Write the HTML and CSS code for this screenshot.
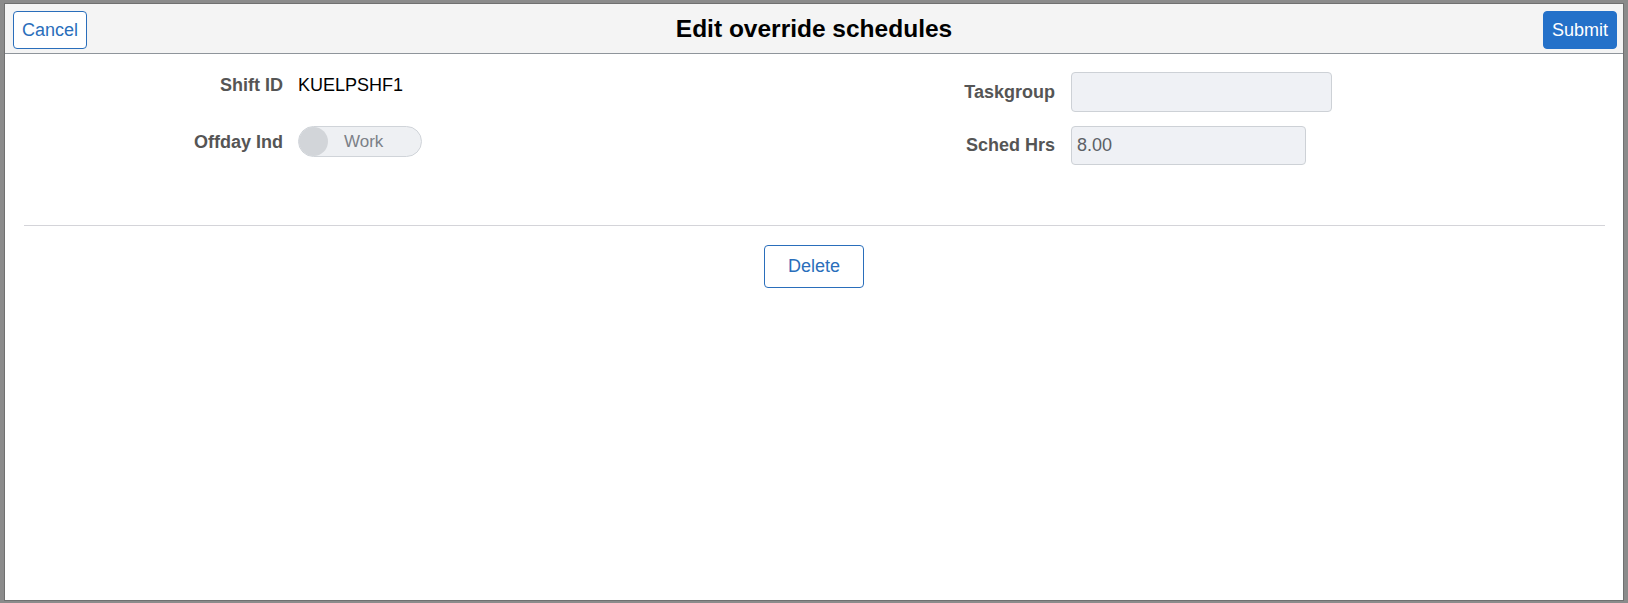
FILE: index.html
```html
<!DOCTYPE html>
<html lang="en">
<head>
<meta charset="utf-8">
<title>Edit override schedules</title>
<link rel="stylesheet" href="styles.css">
</head>
<body>
<div class="modal">
  <header class="bar">
    <div class="bar-left"><button class="btn btn-outline">Cancel</button></div>
    <h1 class="title">Edit override schedules</h1>
    <div class="bar-right"><button class="btn btn-primary">Submit</button></div>
  </header>
  <main class="content">
    <div class="fields">
      <div class="col col-left">
        <div class="label">Shift ID</div>
        <div class="value">KUELPSHF1</div>
        <div class="label label-low">Offday Ind</div>
        <div class="value">
          <div class="toggle"><span class="knob"></span><span class="toggle-text">Work</span></div>
        </div>
      </div>
      <div class="col col-right">
        <div class="label">Taskgroup</div>
        <div class="value"><div class="input input-wide"></div></div>
        <div class="label">Sched Hrs</div>
        <div class="value"><div class="input input-narrow">8.00</div></div>
      </div>
    </div>
    <hr class="divider">
    <div class="actions"><button class="btn btn-outline btn-delete">Delete</button></div>
  </main>
</div>
</body>
</html>
```

FILE: styles.css
```css
html, body {
  height: 100%;
}
body {
  margin: 0;
  padding: 3px 4px 2px 4px;
  box-sizing: border-box;
  background: #8b8b8b;
  font-family: "Liberation Sans", Arial, sans-serif;
  display: flex;
  flex-direction: column;
}
.modal {
  flex: 1;
  background: #fff;
  border: 1px solid #707070;
  display: flex;
  flex-direction: column;
}
.bar {
  height: 49px;
  background: #f4f4f4;
  border-bottom: 1px solid #8f959b;
  display: grid;
  grid-template-columns: 1fr auto 1fr;
  align-items: start;
}
.bar-left {
  padding: 7px 0 0 8px;
}
.bar-right {
  padding: 7px 6px 0 0;
  display: flex;
  justify-content: flex-end;
}
.title {
  margin: 0;
  font-size: 24.5px;
  font-weight: bold;
  line-height: 49px;
  color: #000;
}
.btn {
  font-family: "Liberation Sans", Arial, sans-serif;
  font-size: 18px;
  height: 38px;
  padding: 0 8px;
  border-radius: 4px;
  box-sizing: border-box;
  cursor: pointer;
}
.btn-outline {
  background: #fff;
  color: #2a6ebb;
  border: 1px solid #2a6ebb;
}
.btn-primary {
  background: #2471c9;
  color: #fff;
  border: 1px solid #2471c9;
}
.btn-delete {
  height: 43px;
  padding: 0 23px;
}
.content {
  flex: 1;
}
.fields {
  display: grid;
  grid-template-columns: 809px 1fr;
}
.col {
  display: grid;
  align-items: center;
}
.col-left {
  padding-top: 16px;
  grid-template-columns: 278px auto;
  grid-template-rows: 30px 31px;
  row-gap: 26px;
  column-gap: 15px;
}
.col-right {
  padding-top: 18px;
  grid-template-columns: 241px auto;
  grid-template-rows: 40px 39px;
  row-gap: 14px;
  column-gap: 16px;
}
.label {
  text-align: right;
  font-weight: bold;
  font-size: 18px;
  color: #555;
}
.label-low {
  padding-top: 2px;
}
.value {
  font-size: 18px;
  color: #000;
  display: flex;
  align-items: center;
}
.toggle {
  width: 124px;
  height: 31px;
  box-sizing: border-box;
  border: 1px solid #d0d4d9;
  border-radius: 16px;
  background: #eef0f3;
  display: flex;
  align-items: center;
}
.knob {
  width: 29px;
  height: 29px;
  border-radius: 50%;
  background: #d2d5d9;
  flex: none;
}
.toggle-text {
  margin-left: 16px;
  font-size: 17px;
  color: #7b8087;
}
.input {
  height: 40px;
  box-sizing: border-box;
  border: 1px solid #cdd1d6;
  border-radius: 4px;
  background: #eff1f5;
  font-size: 18px;
  color: #5c6066;
  padding-left: 5px;
  display: flex;
  align-items: center;
}
.input-wide {
  width: 261px;
}
.input-narrow {
  width: 235px;
  height: 39px;
}
.divider {
  margin: 60px 18px 0 19px;
  border: 0;
  border-top: 1px solid #d4d4d9;
  height: 0;
}
.actions {
  display: flex;
  justify-content: center;
  padding-top: 19px;
}
```
